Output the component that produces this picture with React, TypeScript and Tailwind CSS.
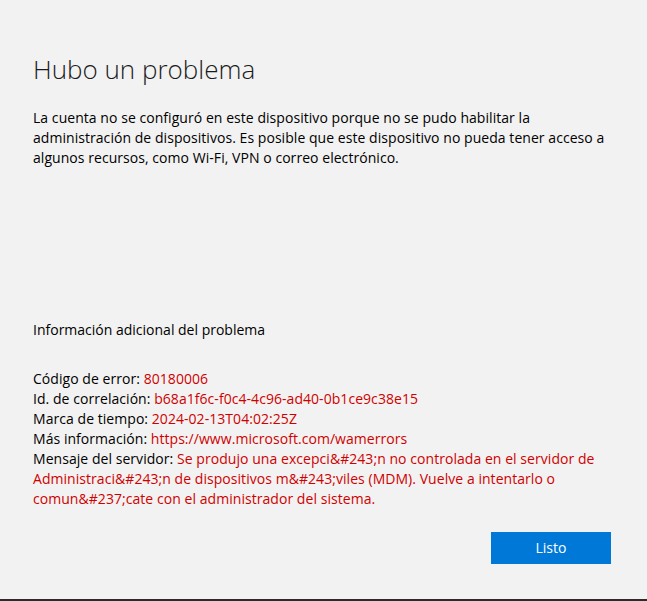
export default function App() {
  const rows: [string, string][] = [
    ['Código de error: ', '80180006'],
    ['Id. de correlación: ', 'b68a1f6c-f0c4-4c96-ad40-0b1ce9c38e15'],
    ['Marca de tiempo: ', '2024-02-13T04:02:25Z'],
    ['Más información: ', 'https://www.microsoft.com/wamerrors'],
  ];

  return (
    <div
      className="w-[647px] h-[601px] bg-[#f2f2f2] border-b-2 border-[#2b2b2b] flex flex-col px-[33px] text-[#000] overflow-hidden"
      style={{ fontFamily: '"Open Sans", "Noto Sans", sans-serif' }}
    >
      {/* title */}
      <h1 className="mt-[53px] text-[26px] leading-[32px] font-light text-[#1b1b1b]">
        Hubo un problema
      </h1>

      <p className="mt-[23px] text-[14px] leading-[20px] tracking-[0.05px]">
        La cuenta no se configuró en este dispositivo porque no se pudo habilitar la
        <br />
        administración de dispositivos. Es posible que este dispositivo no pueda tener acceso a
        <br />
        algunos recursos, como Wi-Fi, VPN o correo electrónico.
      </p>

      <div className="flex-1" />

      {/* detalles */}
      <h2 className="text-[14px] leading-[20px]">Información adicional del problema</h2>

      <div className="mt-[29px] text-[14px] leading-[20px] tracking-[0.05px]">
        {rows.map(([label, value]) => (
          <div key={label}>
            {label}
            <span className="text-[#d00000]">{value}</span>
          </div>
        ))}
        <div>
          Mensaje del servidor:{' '}
          <span className="text-[#d00000]">
            Se produjo una excepci&amp;#243;n no controlada en el servidor de
            <br />
            Administraci&amp;#243;n de dispositivos m&amp;#243;viles (MDM). Vuelve a intentarlo o
            <br />
            comun&amp;#237;cate con el administrador del sistema.
          </span>
        </div>
      </div>

      <div className="flex justify-end mt-[23px] mb-[35px] mr-[3px]">
        <button className="w-[120px] h-[32px] bg-[#0078d7] text-white text-[14px] leading-[20px]">
          Listo
        </button>
      </div>
    </div>
  );
}
